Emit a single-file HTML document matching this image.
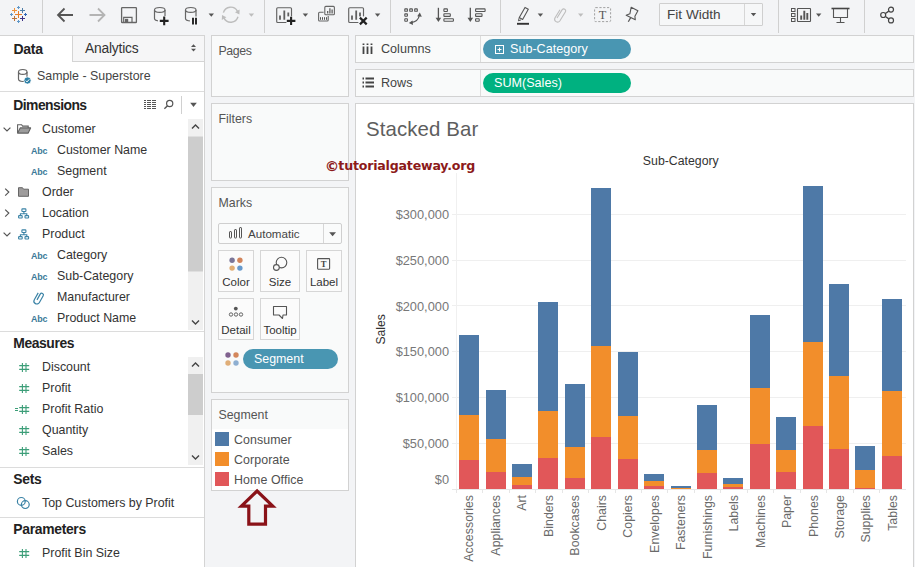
<!DOCTYPE html>
<html lang="en"><head><meta charset="utf-8"><title>Stacked Bar</title><style>
html,body{margin:0;padding:0}
body{width:915px;height:567px;overflow:hidden;position:relative;background:#f3f4f6;font-family:"Liberation Sans",sans-serif;color:#333;font-size:12.4px}
.a{position:absolute}
.t{position:absolute;white-space:nowrap;line-height:1}
.card{position:absolute;box-sizing:border-box;border:1px solid #d2d2d2;background:#f9fafa}
.ct{position:absolute;left:6.5px;top:8.5px;font-size:12.35px;color:#555;white-space:nowrap;line-height:1}
.sep{position:absolute;top:0;width:1px;height:33px;background:#d0d0d0}
.f{position:absolute;left:0;white-space:nowrap;line-height:1;font-size:12.4px;color:#333}
.h{position:absolute;left:13.3px;white-space:nowrap;line-height:1;font-size:13.9px;font-weight:bold;color:#222;letter-spacing:-0.55px}
.abc{position:absolute;white-space:nowrap;line-height:1;font-size:8.9px;font-weight:bold;color:#3b7a99;left:31px;letter-spacing:-0.15px}
.hl{position:absolute;left:0;width:204px;height:1px;background:#dcdcdc}
svg{position:absolute;overflow:visible}
.yl{position:absolute;white-space:nowrap;line-height:1;font-size:12.8px;color:#787878;right:0}
.xl{position:absolute;white-space:nowrap;line-height:1;font-size:12.4px;color:#6a6a6a;transform-origin:0 0;transform:rotate(-90deg);letter-spacing:0px}
</style></head><body>
<div class="a" style="left:0;top:0;width:915px;height:34px;background:#f3f4f6"></div>
<div class="sep" style="left:42px"></div>
<div class="sep" style="left:264px"></div>
<div class="sep" style="left:390px"></div>
<div class="sep" style="left:500px"></div>
<div class="sep" style="left:778px"></div>
<div class="sep" style="left:864px"></div>
<svg style="left:0;top:0" width="40" height="34" shape-rendering="crispEdges"><path d="M15.0 14.5H22.0M18.5 11.0V18.0" stroke="#e8802a" stroke-width="1" fill="none"/><path d="M12.0 10.5H17.0M14.5 8.0V13.0" stroke="#f0933a" stroke-width="1" fill="none"/><path d="M20.0 10.5H25.0M22.5 8.0V13.0" stroke="#4f7ea8" stroke-width="1" fill="none"/><path d="M12.0 18.5H17.0M14.5 16.0V21.0" stroke="#b9733c" stroke-width="1" fill="none"/><path d="M20.0 18.5H25.0M22.5 16.0V21.0" stroke="#3d3285" stroke-width="1" fill="none"/><path d="M17.0 7.5H20.0M18.5 6.0V9.0" stroke="#5f97c8" stroke-width="1" fill="none"/><path d="M17.0 21.5H20.0M18.5 20.0V23.0" stroke="#5f97c8" stroke-width="1" fill="none"/><path d="M10.0 14.5H13.0M11.5 13.0V16.0" stroke="#5f97c8" stroke-width="1" fill="none"/><path d="M24.0 14.5H27.0M25.5 13.0V16.0" stroke="#2f66b5" stroke-width="1" fill="none"/></svg>
<svg style="left:0;top:0" width="915" height="34" fill="none" stroke-linecap="butt"><path d="M58 15H73M64.5 8.5L58 15L64.5 21.5" stroke="#555" stroke-width="1.8"/><path d="M89.5 15H104.5M98 8.5L104.5 15L98 21.5" stroke="#b4b4b4" stroke-width="1.8"/><rect x="121.6" y="7.7" width="14.8" height="14.8" rx="0.6" stroke="#666" stroke-width="1.3"/><path d="M123.7 22V17.4H132V22" stroke="#666" stroke-width="1.2"/><rect x="125" y="18.8" width="3.2" height="3.4" fill="#666"/><ellipse cx="159.75" cy="9.9" rx="5.25" ry="2.4" stroke="#666" stroke-width="1.2"/><path d="M154.5 9.9V18.6A5.25 2.4 0 0 0 165.0 18.6V9.9" stroke="#666" stroke-width="1.2"/><rect x="158" y="16" width="11" height="9" fill="#f6f7f9"/><path d="M159.8 20.9H168.6M164.2 16.6V25.2" stroke="#222" stroke-width="2.1"/><ellipse cx="190.75" cy="9.9" rx="5.25" ry="2.4" stroke="#666" stroke-width="1.2"/><path d="M185.5 9.9V18.6A5.25 2.4 0 0 0 196.0 18.6V9.9" stroke="#666" stroke-width="1.2"/><rect x="190" y="16.5" width="9" height="9" fill="#f6f7f9"/><path d="M193 17.8V24.6M196 17.8V24.6" stroke="#222" stroke-width="1.9"/><path d="M208.60000000000002 13.6H214.0L211.3 16.8Z" fill="#555" stroke="none"/><path d="M223.4 12.6A7.6 7.6 0 0 1 237.4 11.2" stroke="#bdbdbd" stroke-width="1.4"/><path d="M238 16.8A7.6 7.6 0 0 1 224 18.2" stroke="#bdbdbd" stroke-width="1.4"/><path d="M235 12.2L239.6 9.4L239.4 14.4Z" fill="#bdbdbd"/><path d="M226.4 17.2L221.8 20L222 15Z" fill="#bdbdbd"/><path d="M248.70000000000002 13.6H254.1L251.4 16.8Z" fill="#bdbdbd" stroke="none"/><rect x="276.7" y="7.7" width="14.8" height="14.8" rx="1" stroke="#636363" stroke-width="1.15"/><path d="M280 19.8V15.6M284.3 19.8V10.6M288.3 19.8V12.5" stroke="#606060" stroke-width="1.8"/><rect x="286.4" y="16.4" width="10" height="9" fill="#f6f7f9"/><path d="M286.8 20.9H295.4M291.1 16.7V25" stroke="#222" stroke-width="2.1"/><path d="M302.7 13.6H308.09999999999997L305.4 16.8Z" fill="#555" stroke="none"/><rect x="324.8" y="6.4" width="9.6" height="8.4" rx="1" stroke="#666" stroke-width="1.1"/><path d="M327.7 13.6V11M329.9 13.6V8.2M332.1 13.6V9.4" stroke="#555" stroke-width="1.2"/><path d="M323.6 12.3H319.6A1 1 0 0 0 318.6 13.3V20A1 1 0 0 0 319.6 21H327.2A1 1 0 0 0 328.2 20V16" stroke="#666" stroke-width="1.1"/><path d="M320.5 19.8V17.2M322.5 19.8V17.2M324.5 19.8V17.2M326.5 19.8V17.2" stroke="#555" stroke-width="1"/><rect x="348.7" y="7.7" width="14.8" height="14.8" rx="1" stroke="#636363" stroke-width="1.15"/><path d="M352 19.8V15.6M356.2 19.8V10.6M360 19.8V12.5" stroke="#606060" stroke-width="1.8"/><rect x="358.4" y="16.4" width="10" height="9" fill="#f6f7f9"/><path d="M359.9 17.6L366.7 24.4M366.7 17.6L359.9 24.4" stroke="#222" stroke-width="2.2"/><path d="M374.90000000000003 13.6H380.3L377.6 16.8Z" fill="#555" stroke="none"/><rect x="404.8" y="8.9" width="2.6" height="2.4" rx="0.4" stroke="#555" stroke-width="1.1"/><rect x="409.75" y="8.9" width="2.6" height="2.4" rx="0.4" stroke="#555" stroke-width="1.1"/><rect x="414.7" y="8.9" width="2.6" height="2.4" rx="0.4" stroke="#555" stroke-width="1.1"/><rect x="404.8" y="13.850000000000001" width="2.6" height="2.4" rx="0.4" stroke="#555" stroke-width="1.1"/><rect x="404.8" y="18.8" width="2.6" height="2.4" rx="0.4" stroke="#555" stroke-width="1.1"/><path d="M411 22.6Q418.4 21.6 419.4 15" stroke="#555" stroke-width="1.2"/><path d="M417.2 16.2L419.8 12.6L421.8 16.8Z" fill="#555"/><path d="M412.6 20.4L408.8 22.9L413 24.9Z" fill="#555"/><path d="M438.4 7.8V19" stroke="#555" stroke-width="1.3"/><path d="M435.6 17.8H441.2L438.4 22Z" fill="#555"/><rect x="443.9" y="8.9" width="3.5" height="2.6" rx="0.5" stroke="#555" stroke-width="1.1"/><rect x="443.9" y="13.8" width="6.4" height="2.6" rx="0.5" stroke="#555" stroke-width="1.1"/><rect x="443.9" y="18.7" width="9.5" height="2.6" rx="0.5" stroke="#555" stroke-width="1.1"/><path d="M470.3 7.8V19" stroke="#555" stroke-width="1.3"/><path d="M467.5 17.8H473.1L470.3 22Z" fill="#555"/><rect x="475.6" y="8.9" width="9.5" height="2.6" rx="0.5" stroke="#555" stroke-width="1.1"/><rect x="475.6" y="13.8" width="6.4" height="2.6" rx="0.5" stroke="#555" stroke-width="1.1"/><rect x="475.6" y="18.7" width="3.6" height="2.6" rx="0.5" stroke="#555" stroke-width="1.1"/><path d="M525 7.4L528.3 9.3L522.6 19.4L519.3 17.5Z" stroke="#555" stroke-width="1.1" stroke-linejoin="round"/><path d="M519.3 17.5L518.4 20.8L521 19.9" stroke="#555" stroke-width="1"/><path d="M517 23.8H529" stroke="#333" stroke-width="1.9"/><path d="M537.6999999999999 13.6H543.1L540.4 16.8Z" fill="#555" stroke="none"/><path d="M557 18L562.2 9.6A2 2 0 0 1 565.6 11.6L559.8 21A2.9 2.9 0 0 1 554.9 18L560 9.7" stroke="#bdbdbd" stroke-width="1.1"/><path d="M578.0 13.6H583.4000000000001L580.7 16.8Z" fill="#bdbdbd" stroke="none"/><rect x="594.6" y="7.6" width="16" height="14" rx="1" stroke="#a2a2a2" stroke-width="1" stroke-dasharray="2.2 1.6"/><text x="602.6" y="19.2" text-anchor="middle" font-family="Liberation Serif,serif" font-size="12.4" fill="#555" stroke="none">T</text><path d="M631.2 7.2L637.9 10.8L634.9 16.3L635.3 19.7L626.2 15.3L629.9 13.8Z" stroke="#555" stroke-width="1.1" stroke-linejoin="round"/><path d="M630.7 17.6L628.3 21.8" stroke="#555" stroke-width="1.2"/><rect x="791.5" y="8.5" width="3.5" height="3" stroke="#555" stroke-width="1"/><rect x="791.5" y="13.5" width="3.5" height="3" stroke="#555" stroke-width="1"/><rect x="791.5" y="18.5" width="3.5" height="3" stroke="#555" stroke-width="1"/><rect x="797.5" y="8.5" width="13" height="13" rx="0.5" stroke="#555" stroke-width="1.1"/><path d="M801.2 19.8V15.4M804.3 19.8V10.8M807.3 19.8V13" stroke="#555" stroke-width="1.9"/><path d="M816.0 13.6H821.4000000000001L818.7 16.8Z" fill="#555" stroke="none"/><path d="M831.5 8.5H849.5" stroke="#444" stroke-width="1.6"/><path d="M833.5 9V17.5H847.5V9" stroke="#555" stroke-width="1.1"/><path d="M840.5 17.5V22.5M836.5 22.5H844.5" stroke="#555" stroke-width="1.1"/><circle cx="891" cy="9.6" r="2.5" stroke="#444" stroke-width="1.2"/><circle cx="883.2" cy="15" r="2.5" stroke="#444" stroke-width="1.2"/><circle cx="891" cy="20.4" r="2.5" stroke="#444" stroke-width="1.2"/><path d="M885.4 13.5L888.8 11.1M885.4 16.5L888.8 18.9" stroke="#444" stroke-width="1.3"/></svg>
<div class="a" style="left:659px;top:3px;width:104px;height:23px;box-sizing:border-box;border:1px solid #cfcfcf;background:#f6f7f8;border-radius:1px"></div>
<div class="a" style="left:744px;top:4px;width:1px;height:21px;background:#d6d6d6"></div>
<div class="t" style="left:667px;top:7.7px;font-size:13.6px;color:#444">Fit Width</div>
<svg style="left:0;top:0" width="915" height="34"><path d="M750.8 13.1H756.2L753.5 16.3Z" fill="#555" stroke="none"/></svg>
<div class="a" style="left:0;top:35px;width:204px;height:532px;background:#fff;border-right:1px solid #d4d4d4;border-top:1px solid #d4d4d4;box-sizing:content-box"></div>
<div class="a" style="left:72px;top:35px;width:132px;height:27px;box-sizing:border-box;background:#f6f6f7;border:1px solid #d4d4d4;border-right:none"></div>
<div class="t" style="left:13.5px;top:41.5px;font-size:14px;font-weight:bold;color:#222;letter-spacing:-0.3px">Data</div>
<div class="t" style="left:85px;top:41.5px;font-size:13.8px;color:#333;letter-spacing:-0.2px">Analytics</div>
<svg style="left:0;top:0" width="210" height="70"><path d="M191 47H196L193.5 44.2Z M191 48.8H196L193.5 51.6Z" fill="#555"/></svg>
<svg style="left:0;top:0" width="210" height="100" fill="none"><ellipse cx="22.75" cy="71.9" rx="4.25" ry="2.4" stroke="#666" stroke-width="1.2"/><path d="M18.5 71.9V79.1A4.25 2.4 0 0 0 27.0 79.1V71.9" stroke="#666" stroke-width="1.2"/><circle cx="27.5" cy="80.5" r="3.6" fill="#2d7fa5" stroke="#fff" stroke-width="0.8"/><path d="M25.8 80.6L27 81.9L29.3 79.3" stroke="#fff" stroke-width="1"/></svg>
<div class="t" style="left:37px;top:70px;font-size:12.4px;color:#444">Sample - Superstore</div>
<div class="hl" style="top:91px"></div>
<div class="h" style="top:99.2px">Dimensions</div>
<svg style="left:0;top:0" width="210" height="120" fill="none"><path d="M144 100.5H146M147 100.5H151M152 100.5H156" stroke="#555" stroke-width="1" shape-rendering="crispEdges"/><path d="M144 102.5H146M147 102.5H151M152 102.5H156" stroke="#555" stroke-width="1" shape-rendering="crispEdges"/><path d="M144 104.5H146M147 104.5H151M152 104.5H156" stroke="#555" stroke-width="1" shape-rendering="crispEdges"/><path d="M144 106.5H146M147 106.5H151M152 106.5H156" stroke="#555" stroke-width="1" shape-rendering="crispEdges"/><path d="M144 108.5H146M147 108.5H151M152 108.5H156" stroke="#555" stroke-width="1" shape-rendering="crispEdges"/><circle cx="169.7" cy="103.5" r="3.1" stroke="#555" stroke-width="1.2"/><path d="M167.5 105.8L164.4 108.7" stroke="#555" stroke-width="1.4"/><path d="M181.5 96V114" stroke="#d0d0d0" stroke-width="1"/><path d="M190.2 102.8H196.8L193.5 107Z" fill="#555"/></svg>
<div class="f" style="left:42.0px;top:122.6px">Customer</div>
<div class="f" style="left:57.0px;top:143.6px">Customer Name</div>
<div class="abc" style="top:146.6px">Abc</div>
<div class="f" style="left:57.0px;top:164.6px">Segment</div>
<div class="abc" style="top:167.6px">Abc</div>
<div class="f" style="left:42.0px;top:185.6px">Order</div>
<div class="f" style="left:42.0px;top:206.6px">Location</div>
<div class="f" style="left:42.0px;top:227.6px">Product</div>
<div class="f" style="left:57.0px;top:248.6px">Category</div>
<div class="abc" style="top:251.6px">Abc</div>
<div class="f" style="left:57.0px;top:269.6px">Sub-Category</div>
<div class="abc" style="top:272.6px">Abc</div>
<div class="f" style="left:57.0px;top:290.6px">Manufacturer</div>
<div class="f" style="left:57.0px;top:311.6px">Product Name</div>
<div class="abc" style="top:314.6px">Abc</div>
<div class="f" style="left:42px;top:360.6px">Discount</div>
<div class="f" style="left:42px;top:381.6px">Profit</div>
<div class="f" style="left:42px;top:402.6px">Profit Ratio</div>
<div class="f" style="left:42px;top:423.6px">Quantity</div>
<div class="f" style="left:42px;top:444.6px">Sales</div>
<svg style="left:0;top:0" width="210" height="567" fill="none"><path d="M3.6 127.6L7 131.0L10.4 127.6" stroke="#555" stroke-width="1.2"/><path d="M17.6 133.1V124.7H21.6L22.6 126.1H28.2V127.9" stroke="#606060" stroke-width="1.1"/><path d="M17.6 133.1L20.2 127.9H30.6L28.2 133.1Z" stroke="#606060" stroke-width="1.1" fill="#9c9c9c" stroke-linejoin="round"/><path d="M5.2 188.6L8.8 192.1L5.2 195.6" stroke="#555" stroke-width="1.2"/><path d="M18.5 196.3V187.7H22.5L23.5 189.2H28.5V196.3Z" stroke="#666" stroke-width="1" fill="#9e9c9c"/><path d="M5.2 209.6L8.8 213.1L5.2 216.6" stroke="#555" stroke-width="1.2"/><rect x="21.9" y="208.9" width="4" height="2.6" rx="0.6" stroke="#3b83a6" stroke-width="1.1"/><rect x="18.6" y="215.6" width="3.6" height="2.4" rx="0.6" stroke="#3b83a6" stroke-width="1.1"/><rect x="25" y="215.6" width="3.6" height="2.4" rx="0.6" stroke="#3b83a6" stroke-width="1.1"/><path d="M23.9 211.5V213.7M20.4 215.6V213.7H26.8V215.6" stroke="#3b83a6" stroke-width="1.1"/><path d="M3.6 232.6L7 236.0L10.4 232.6" stroke="#555" stroke-width="1.2"/><rect x="21.9" y="229.9" width="4" height="2.6" rx="0.6" stroke="#3b83a6" stroke-width="1.1"/><rect x="18.6" y="236.6" width="3.6" height="2.4" rx="0.6" stroke="#3b83a6" stroke-width="1.1"/><rect x="25" y="236.6" width="3.6" height="2.4" rx="0.6" stroke="#3b83a6" stroke-width="1.1"/><path d="M23.9 232.5V234.7M20.4 236.6V234.7H26.8V236.6" stroke="#3b83a6" stroke-width="1.1"/><path d="M38.2 299.1L41.4 293.3A1.7 1.7 0 0 1 44.4 295.0L40.6 301.7A2.9 2.9 0 0 1 35.5 298.9L39.4 292.1" stroke="#3b83a6" stroke-width="1.2" transform="translate(-1.2,0.8)"/><rect x="188" y="119" width="15" height="211" fill="#f0f0f0"/><rect x="188" y="136.5" width="15" height="135" fill="#cdcdcd"/><path d="M192 128.5L195.5 125L199 128.5" stroke="#444" stroke-width="1.4"/><path d="M192 320.5L195.5 324L199 320.5" stroke="#444" stroke-width="1.4"/><rect x="188" y="357" width="15" height="108" fill="#f0f0f0"/><rect x="188" y="374" width="15" height="41" fill="#cdcdcd"/><path d="M192 366.5L195.5 363L199 366.5" stroke="#444" stroke-width="1.4"/><path d="M192 455.5L195.5 459L199 455.5" stroke="#444" stroke-width="1.4"/><path d="M19.2 365.6H29.2M19.2 369.4H29.2M22.4 363.0V372.0M26.0 363.0V372.0" stroke="#3c9e78" stroke-width="1.1"/><path d="M19.2 386.6H29.2M19.2 390.4H29.2M22.4 384.0V393.0M26.0 384.0V393.0" stroke="#3c9e78" stroke-width="1.1"/><path d="M19.2 407.6H29.2M19.2 411.4H29.2M22.4 405.0V414.0M26.0 405.0V414.0" stroke="#3c9e78" stroke-width="1.1"/><path d="M15 408.5H18M15 410.5H18" stroke="#3c9e78" stroke-width="1"/><path d="M19.2 428.6H29.2M19.2 432.4H29.2M22.4 426.0V435.0M26.0 426.0V435.0" stroke="#3c9e78" stroke-width="1.1"/><path d="M19.2 449.6H29.2M19.2 453.4H29.2M22.4 447.0V456.0M26.0 447.0V456.0" stroke="#3c9e78" stroke-width="1.1"/><circle cx="21.3" cy="501.4" r="3.9" stroke="#3b83a6" stroke-width="1.2"/><circle cx="25.3" cy="504.6" r="3.9" stroke="#3b83a6" stroke-width="1.2"/><path d="M19.2 551.6H29.2M19.2 555.4H29.2M22.4 549.0V558.0M26.0 549.0V558.0" stroke="#3c9e78" stroke-width="1.1"/></svg>
<div class="hl" style="top:331px"></div>
<div class="h" style="top:337.2px;letter-spacing:-0.42px">Measures</div>
<div class="hl" style="top:467px"></div>
<div class="h" style="top:473.4px;letter-spacing:-0.3px">Sets</div>
<div class="f" style="left:42px;top:496.6px">Top Customers by Profit</div>
<div class="hl" style="top:517px"></div>
<div class="h" style="top:523.4px;letter-spacing:-0.31px">Parameters</div>
<div class="f" style="left:42px;top:546.6px">Profit Bin Size</div>
<div class="card" style="left:211px;top:35px;width:138px;height:62px"><div class="ct" style="letter-spacing:-0.4px">Pages</div></div>
<div class="card" style="left:211px;top:103px;width:138px;height:78px"><div class="ct">Filters</div></div>
<div class="card" style="left:211px;top:187px;width:138px;height:206px"><div class="ct">Marks</div></div>
<div class="card" style="left:211px;top:399px;width:138px;height:92px"><div class="ct" style="top:9.4px">Segment</div><div class="a" style="left:0;top:29px;width:136px;height:61px;background:#fff"></div></div>
<div class="a" style="left:218px;top:223px;width:124px;height:21px;box-sizing:border-box;border:1px solid #cfcfcf;background:#fafbfb;border-radius:2px"></div>
<div class="a" style="left:323px;top:224px;width:1px;height:19px;background:#d6d6d6"></div>
<div class="t" style="left:248px;top:227.5px;font-size:11.6px;color:#444">Automatic</div>
<svg style="left:0;top:0" width="360" height="567" fill="none"><rect x="229.5" y="231.6" width="2" height="6.4" rx="0.5" stroke="#555" stroke-width="1"/><rect x="234.5" y="229.6" width="2" height="8.4" rx="0.5" stroke="#555" stroke-width="1"/><rect x="239.5" y="227.6" width="2" height="10.4" rx="0.5" stroke="#555" stroke-width="1"/><path d="M329.2 232.2H336L332.6 236.2Z" fill="#555"/><rect x="218.5" y="250.5" width="35" height="41" stroke="#d6d6d6" stroke-width="1" fill="#fbfbfb"/><rect x="260.5" y="250.5" width="39" height="41" stroke="#d6d6d6" stroke-width="1" fill="#fbfbfb"/><rect x="306.5" y="250.5" width="35" height="41" stroke="#d6d6d6" stroke-width="1" fill="#fbfbfb"/><rect x="218.5" y="298.5" width="35" height="41" stroke="#d6d6d6" stroke-width="1" fill="#fbfbfb"/><rect x="260.5" y="298.5" width="39" height="41" stroke="#d6d6d6" stroke-width="1" fill="#fbfbfb"/><circle cx="232.1" cy="260.3" r="2.7" fill="#7b7698"/><circle cx="239.9" cy="260.3" r="2.7" fill="#d2845b"/><circle cx="232.1" cy="268.09999999999997" r="2.7" fill="#e2ae74"/><circle cx="239.9" cy="268.09999999999997" r="2.7" fill="#6699cc"/><circle cx="281.5" cy="262.6" r="5.3" stroke="#555" stroke-width="1.1" fill="#fbfbfb"/><circle cx="276.4" cy="267.5" r="2.9" stroke="#555" stroke-width="1.1" fill="#fbfbfb"/><rect x="317.6" y="258.6" width="12" height="10.6" rx="0.6" stroke="#555" stroke-width="1.1"/><text x="323.6" y="267.2" text-anchor="middle" font-family="Liberation Serif,serif" font-weight="bold" font-size="8.6" fill="#444" stroke="none">T</text><circle cx="235.8" cy="308.6" r="1.9" fill="#555"/><circle cx="231" cy="314.5" r="1.7" stroke="#555" stroke-width="0.9"/><circle cx="236" cy="314.5" r="1.7" stroke="#555" stroke-width="0.9"/><circle cx="241" cy="314.5" r="1.7" stroke="#555" stroke-width="0.9"/><path d="M273.5 306.5H286.5V315H283L282.5 318.5L279 315H273.5Z" stroke="#555" stroke-width="1.1" stroke-linejoin="round"/><circle cx="228" cy="355" r="2.7" fill="#80628f"/><circle cx="236" cy="355" r="2.7" fill="#d4875c"/><circle cx="228" cy="363" r="2.7" fill="#e0ae78"/><circle cx="236" cy="363" r="2.7" fill="#8fafd1"/></svg>
<div class="t" style="left:218px;width:36px;text-align:center;top:277.4px;font-size:11.5px;color:#333">Color</div>
<div class="t" style="left:260px;width:40px;text-align:center;top:277.4px;font-size:11.5px;color:#333">Size</div>
<div class="t" style="left:306px;width:36px;text-align:center;top:277.4px;font-size:11.5px;color:#333">Label</div>
<div class="t" style="left:218px;width:36px;text-align:center;top:325.4px;font-size:11.5px;color:#333">Detail</div>
<div class="t" style="left:260px;width:40px;text-align:center;top:325.4px;font-size:11.5px;color:#333">Tooltip</div>
<div class="a" style="left:243px;top:349px;width:95px;height:20px;border-radius:10px;background:#4996b2"></div>
<div class="t" style="left:254px;top:352.5px;font-size:12.4px;color:#fff">Segment</div>
<div class="a" style="left:215px;top:432px;width:14px;height:14px;background:#4e79a7"></div>
<div class="t" style="left:234px;top:434px;font-size:12.4px;color:#505050;letter-spacing:0.08px">Consumer</div>
<div class="a" style="left:215px;top:452px;width:14px;height:14px;background:#f28e2b"></div>
<div class="t" style="left:234px;top:454px;font-size:12.4px;color:#505050;letter-spacing:0.08px">Corporate</div>
<div class="a" style="left:215px;top:472px;width:14px;height:14px;background:#e15759"></div>
<div class="t" style="left:234px;top:474px;font-size:12.4px;color:#505050;letter-spacing:0.08px">Home Office</div>
<svg style="left:0;top:0" width="360" height="567" fill="none"><path d="M257.1 491L241.4 506.2H248.8V524.2H265.5V506.2H272.8Z" stroke="#8a1218" stroke-width="3.2" stroke-linejoin="miter"/></svg>
<div class="card" style="left:355px;top:35px;width:559px;height:28px"></div>
<div class="card" style="left:355px;top:69px;width:559px;height:28px"></div>
<div class="a" style="left:480px;top:36px;width:1px;height:26px;background:#dcdcdc"></div>
<div class="a" style="left:480px;top:70px;width:1px;height:26px;background:#dcdcdc"></div>
<svg style="left:0;top:0" width="915" height="110" fill="none"><path d="M363.5 43.5V45M363.5 46.5V54" stroke="#444" stroke-width="1.8"/><path d="M367.5 43.5V45M367.5 46.5V54" stroke="#444" stroke-width="1.8"/><path d="M371.5 43.5V45M371.5 46.5V54" stroke="#444" stroke-width="1.8"/><path d="M362.5 78.5H364M365.5 78.5H374" stroke="#444" stroke-width="1.8"/><path d="M362.5 82.5H364M365.5 82.5H374" stroke="#444" stroke-width="1.8"/><path d="M362.5 86.5H364M365.5 86.5H374" stroke="#444" stroke-width="1.8"/></svg>
<div class="t" style="left:381px;top:42.5px;font-size:12.6px;color:#444">Columns</div>
<div class="t" style="left:381px;top:76.5px;font-size:12.6px;color:#444">Rows</div>
<div class="a" style="left:483px;top:39px;width:148px;height:20px;border-radius:10px;background:#4996b2"></div>
<svg style="left:0;top:0" width="915" height="110" fill="none"><rect x="495.5" y="45.5" width="8" height="8" stroke="#fff" stroke-width="1"/><path d="M497.5 49.5H501.5M499.5 47.5V51.5" stroke="#fff" stroke-width="1"/></svg>
<div class="t" style="left:510px;top:42.5px;font-size:12.6px;color:#fff">Sub-Category</div>
<div class="a" style="left:483px;top:73px;width:148px;height:20px;border-radius:10px;background:#00b180"></div>
<div class="t" style="left:494px;top:76.5px;font-size:12.6px;color:#fff">SUM(Sales)</div>
<div class="a" style="left:355px;top:103px;width:559px;height:470px;box-sizing:border-box;border:1px solid #d2d2d2;background:#fff"></div>
<div class="t" style="left:366px;top:118.6px;font-size:20.4px;color:#5e5e5e;letter-spacing:0.12px">Stacked Bar</div>
<div class="t" style="left:326px;top:160px;font-size:12.6px;font-weight:bold;color:#8c1a1a;font-family:'DejaVu Sans','Liberation Sans',sans-serif;letter-spacing:-0.2px"><span style="font-size:14.5px;line-height:0;position:relative;top:0.6px;margin-left:-1.2px;margin-right:-0.8px">©</span>tutorialgateway.org</div>
<div class="t" style="left:620.8px;width:120px;text-align:center;top:155px;font-size:12.3px;color:#333">Sub-Category</div>
<div class="t" style="left:0;top:0;font-size:12.2px;color:#333;transform-origin:0 0;transform:translate(374.6px,344.6px) rotate(-90deg)">Sales</div>
<svg style="left:0;top:0" width="915" height="567" fill="none" shape-rendering="crispEdges"><path d="M452 443.5H906" stroke="#efefef" stroke-width="1"/><path d="M452 397.5H906" stroke="#efefef" stroke-width="1"/><path d="M452 351.5H906" stroke="#efefef" stroke-width="1"/><path d="M452 305.5H906" stroke="#efefef" stroke-width="1"/><path d="M452 260.5H906" stroke="#efefef" stroke-width="1"/><path d="M452 214.5H906" stroke="#efefef" stroke-width="1"/><path d="M456.5 173V489.0" stroke="#f0f0f0" stroke-width="1"/><path d="M452 489.5H906" stroke="#e6e6e6" stroke-width="1"/><rect x="459.0" y="334.8" width="20" height="80.2" fill="#4e79a7"/><rect x="459.0" y="415.0" width="20" height="44.8" fill="#f28e2b"/><rect x="459.0" y="459.8" width="20" height="29.2" fill="#e15759"/><path d="M456.5 489.0V493.0" stroke="#e6e6e6" stroke-width="1"/><rect x="486.0" y="390.2" width="20" height="48.8" fill="#4e79a7"/><rect x="486.0" y="439.0" width="20" height="32.7" fill="#f28e2b"/><rect x="486.0" y="471.7" width="20" height="17.3" fill="#e15759"/><path d="M482.5 489.0V493.0" stroke="#e6e6e6" stroke-width="1"/><rect x="512.0" y="463.9" width="20" height="12.7" fill="#4e79a7"/><rect x="512.0" y="476.6" width="20" height="8.3" fill="#f28e2b"/><rect x="512.0" y="484.9" width="20" height="4.1" fill="#e15759"/><path d="M509.5 489.0V493.0" stroke="#e6e6e6" stroke-width="1"/><rect x="538.0" y="302.0" width="20" height="109.0" fill="#4e79a7"/><rect x="538.0" y="411.0" width="20" height="46.8" fill="#f28e2b"/><rect x="538.0" y="457.8" width="20" height="31.2" fill="#e15759"/><path d="M535.5 489.0V493.0" stroke="#e6e6e6" stroke-width="1"/><rect x="565.0" y="383.8" width="20" height="63.2" fill="#4e79a7"/><rect x="565.0" y="447.0" width="20" height="30.6" fill="#f28e2b"/><rect x="565.0" y="477.6" width="20" height="11.4" fill="#e15759"/><path d="M562.5 489.0V493.0" stroke="#e6e6e6" stroke-width="1"/><rect x="591.0" y="187.7" width="20" height="157.8" fill="#4e79a7"/><rect x="591.0" y="345.5" width="20" height="91.2" fill="#f28e2b"/><rect x="591.0" y="436.7" width="20" height="52.3" fill="#e15759"/><path d="M588.5 489.0V493.0" stroke="#e6e6e6" stroke-width="1"/><rect x="618.0" y="351.7" width="20" height="63.9" fill="#4e79a7"/><rect x="618.0" y="415.6" width="20" height="42.9" fill="#f28e2b"/><rect x="618.0" y="458.5" width="20" height="30.5" fill="#e15759"/><path d="M615.5 489.0V493.0" stroke="#e6e6e6" stroke-width="1"/><rect x="644.0" y="474.0" width="20" height="6.9" fill="#4e79a7"/><rect x="644.0" y="480.9" width="20" height="4.7" fill="#f28e2b"/><rect x="644.0" y="485.6" width="20" height="3.4" fill="#e15759"/><path d="M641.5 489.0V493.0" stroke="#e6e6e6" stroke-width="1"/><rect x="671.0" y="485.9" width="20" height="1.8" fill="#4e79a7"/><rect x="671.0" y="487.7" width="20" height="1.0" fill="#f28e2b"/><rect x="671.0" y="488.7" width="20" height="0.3" fill="#e15759"/><path d="M667.5 489.0V493.0" stroke="#e6e6e6" stroke-width="1"/><rect x="697.0" y="404.8" width="20" height="44.8" fill="#4e79a7"/><rect x="697.0" y="449.6" width="20" height="23.1" fill="#f28e2b"/><rect x="697.0" y="472.7" width="20" height="16.3" fill="#e15759"/><path d="M694.5 489.0V493.0" stroke="#e6e6e6" stroke-width="1"/><rect x="723.0" y="477.6" width="20" height="6.0" fill="#4e79a7"/><rect x="723.0" y="483.6" width="20" height="2.9" fill="#f28e2b"/><rect x="723.0" y="486.5" width="20" height="2.5" fill="#e15759"/><path d="M720.5 489.0V493.0" stroke="#e6e6e6" stroke-width="1"/><rect x="750.0" y="315.0" width="20" height="72.6" fill="#4e79a7"/><rect x="750.0" y="387.6" width="20" height="56.1" fill="#f28e2b"/><rect x="750.0" y="443.7" width="20" height="45.3" fill="#e15759"/><path d="M747.5 489.0V493.0" stroke="#e6e6e6" stroke-width="1"/><rect x="776.0" y="417.0" width="20" height="32.6" fill="#4e79a7"/><rect x="776.0" y="449.6" width="20" height="22.1" fill="#f28e2b"/><rect x="776.0" y="471.7" width="20" height="17.3" fill="#e15759"/><path d="M773.5 489.0V493.0" stroke="#e6e6e6" stroke-width="1"/><rect x="803.0" y="186.2" width="20" height="155.3" fill="#4e79a7"/><rect x="803.0" y="341.5" width="20" height="84.4" fill="#f28e2b"/><rect x="803.0" y="425.9" width="20" height="63.1" fill="#e15759"/><path d="M800.5 489.0V493.0" stroke="#e6e6e6" stroke-width="1"/><rect x="829.0" y="283.8" width="20" height="91.7" fill="#4e79a7"/><rect x="829.0" y="375.5" width="20" height="73.1" fill="#f28e2b"/><rect x="829.0" y="448.6" width="20" height="40.4" fill="#e15759"/><path d="M826.5 489.0V493.0" stroke="#e6e6e6" stroke-width="1"/><rect x="855.0" y="445.8" width="20" height="23.9" fill="#4e79a7"/><rect x="855.0" y="469.7" width="20" height="17.8" fill="#f28e2b"/><rect x="855.0" y="487.5" width="20" height="1.5" fill="#e15759"/><path d="M853.5 489.0V493.0" stroke="#e6e6e6" stroke-width="1"/><rect x="882.0" y="299.0" width="20" height="91.9" fill="#4e79a7"/><rect x="882.0" y="390.9" width="20" height="65.0" fill="#f28e2b"/><rect x="882.0" y="455.9" width="20" height="33.1" fill="#e15759"/><path d="M879.5 489.0V493.0" stroke="#e6e6e6" stroke-width="1"/></svg>
<div class="a" style="left:380px;width:69px;top:473.6px;height:13px"><div class="yl">$0</div></div>
<div class="a" style="left:380px;width:69px;top:438.1px;height:13px"><div class="yl">$50,000</div></div>
<div class="a" style="left:380px;width:69px;top:392.3px;height:13px"><div class="yl">$100,000</div></div>
<div class="a" style="left:380px;width:69px;top:346.4px;height:13px"><div class="yl">$150,000</div></div>
<div class="a" style="left:380px;width:69px;top:300.5px;height:13px"><div class="yl">$200,000</div></div>
<div class="a" style="left:380px;width:69px;top:254.6px;height:13px"><div class="yl">$250,000</div></div>
<div class="a" style="left:380px;width:69px;top:208.8px;height:13px"><div class="yl">$300,000</div></div>
<div class="a" style="left:463.3px;top:494.6px;width:0;height:0"><div class="xl" style="transform:rotate(-90deg) translate(-100%,0)">Accessories</div></div>
<div class="a" style="left:489.8px;top:494.6px;width:0;height:0"><div class="xl" style="transform:rotate(-90deg) translate(-100%,0)">Appliances</div></div>
<div class="a" style="left:516.3px;top:494.6px;width:0;height:0"><div class="xl" style="transform:rotate(-90deg) translate(-100%,0)">Art</div></div>
<div class="a" style="left:542.7px;top:494.6px;width:0;height:0"><div class="xl" style="transform:rotate(-90deg) translate(-100%,0)">Binders</div></div>
<div class="a" style="left:569.2px;top:494.6px;width:0;height:0"><div class="xl" style="transform:rotate(-90deg) translate(-100%,0)">Bookcases</div></div>
<div class="a" style="left:595.7px;top:494.6px;width:0;height:0"><div class="xl" style="transform:rotate(-90deg) translate(-100%,0)">Chairs</div></div>
<div class="a" style="left:622.2px;top:494.6px;width:0;height:0"><div class="xl" style="transform:rotate(-90deg) translate(-100%,0)">Copiers</div></div>
<div class="a" style="left:648.6px;top:494.6px;width:0;height:0"><div class="xl" style="transform:rotate(-90deg) translate(-100%,0)">Envelopes</div></div>
<div class="a" style="left:675.1px;top:494.6px;width:0;height:0"><div class="xl" style="transform:rotate(-90deg) translate(-100%,0)">Fasteners</div></div>
<div class="a" style="left:701.6px;top:494.6px;width:0;height:0"><div class="xl" style="transform:rotate(-90deg) translate(-100%,0)">Furnishings</div></div>
<div class="a" style="left:728.0px;top:494.6px;width:0;height:0"><div class="xl" style="transform:rotate(-90deg) translate(-100%,0)">Labels</div></div>
<div class="a" style="left:754.5px;top:494.6px;width:0;height:0"><div class="xl" style="transform:rotate(-90deg) translate(-100%,0)">Machines</div></div>
<div class="a" style="left:781.0px;top:494.6px;width:0;height:0"><div class="xl" style="transform:rotate(-90deg) translate(-100%,0)">Paper</div></div>
<div class="a" style="left:807.5px;top:494.6px;width:0;height:0"><div class="xl" style="transform:rotate(-90deg) translate(-100%,0)">Phones</div></div>
<div class="a" style="left:833.9px;top:494.6px;width:0;height:0"><div class="xl" style="transform:rotate(-90deg) translate(-100%,0)">Storage</div></div>
<div class="a" style="left:860.4px;top:494.6px;width:0;height:0"><div class="xl" style="transform:rotate(-90deg) translate(-100%,0)">Supplies</div></div>
<div class="a" style="left:886.9px;top:494.6px;width:0;height:0"><div class="xl" style="transform:rotate(-90deg) translate(-100%,0)">Tables</div></div>
</body></html>
